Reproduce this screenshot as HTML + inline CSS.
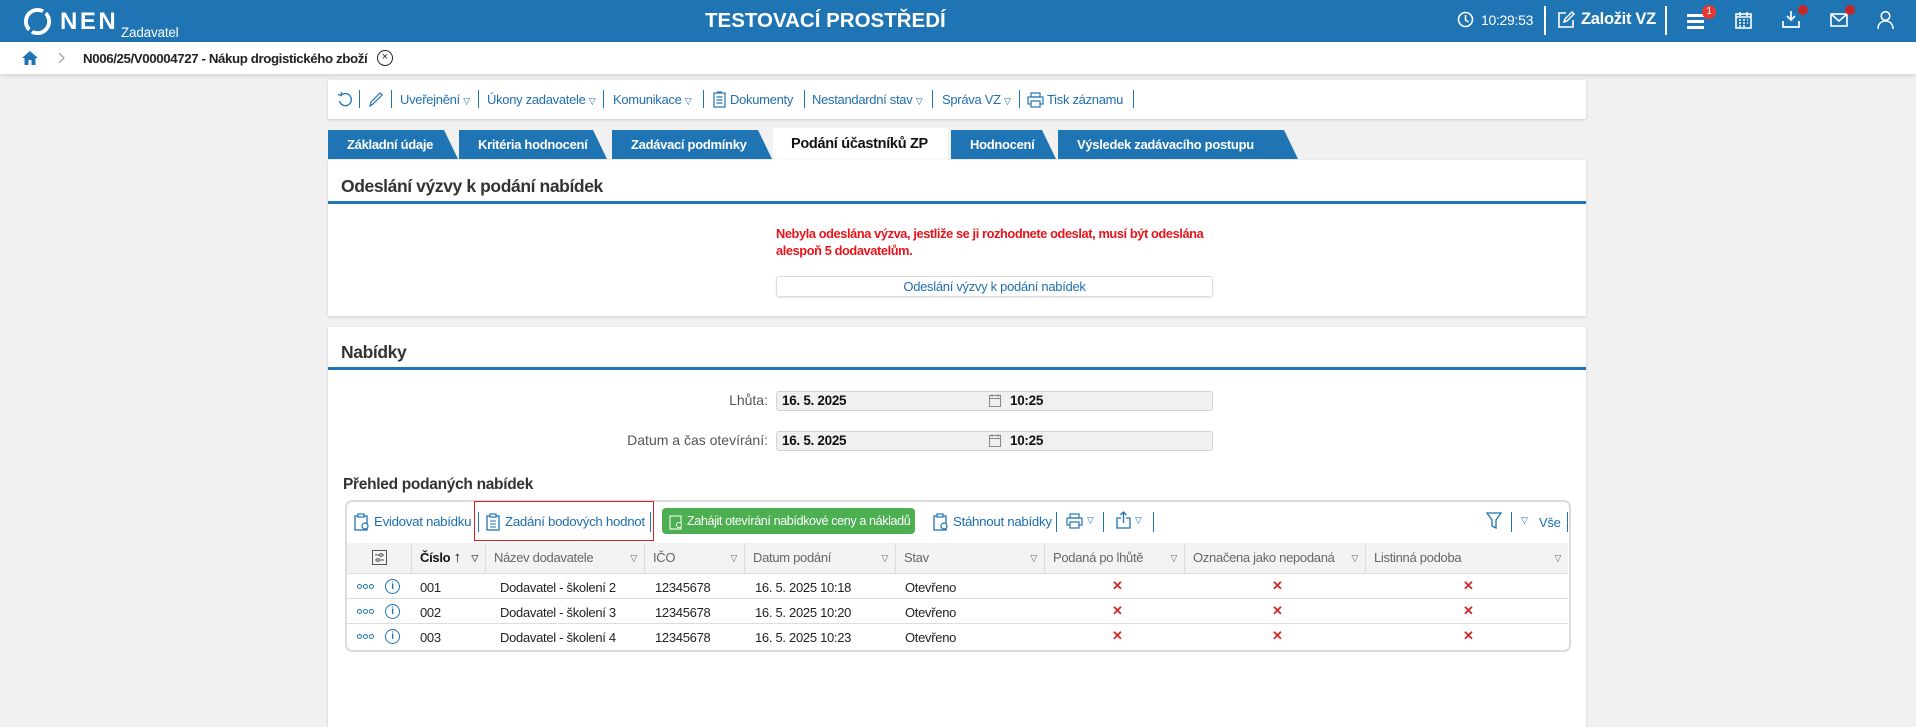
<!DOCTYPE html>
<html><head><meta charset="utf-8">
<style>
*{box-sizing:border-box;margin:0;padding:0}
body{width:1916px;height:717px;overflow:hidden;background:#f1f1f1;font-family:"Liberation Sans",Arial,sans-serif;font-size:13px;letter-spacing:-0.3px;color:#222;position:relative}
.a{position:absolute;white-space:nowrap}
.top{left:0;top:0;width:1916px;height:42px;background:#1f74b3;color:#fff}
.crumb{left:0;top:42px;width:1916px;height:32px;background:#fff;box-shadow:0 2px 4px rgba(0,0,0,.12)}
.card{background:#fff;box-shadow:0 1px 3px rgba(0,0,0,.15)}
.blue{color:#1f6fb0}
.sep{position:absolute;width:1px;background:#1f74b3}
.tab{position:absolute;top:130px;height:29px;background:#1f74b3;color:#fff;font-weight:bold;font-size:13px;line-height:29px;padding-left:19px;clip-path:polygon(0 0,calc(100% - 14px) 0,100% 100%,0 100%)}
.hdr{font-size:17.5px;font-weight:bold;color:#333;letter-spacing:-0.4px}
.line{position:absolute;height:3px;background:#1f74b3}
.inp{position:absolute;height:20px;background:#f0f0f0;border:1px solid #d3d3d3;border-radius:3px;font-weight:bold;font-size:13.5px;line-height:18px;padding-left:5px;color:#111}
.th{position:absolute;top:543px;height:30px;line-height:30px;color:#666;font-size:13px;border-right:1px solid #ddd;padding-left:8px;background:#f3f3f3}
.tri{position:absolute;right:7px;top:0;font-size:9px;color:#666}
.row{position:absolute;left:347px;width:1221px;height:25px;border-bottom:1px solid #ddd}
.x{position:absolute;color:#d42a2a;font-weight:bold;font-size:13px}
.dots{position:absolute;width:17px;height:6px}
.dots i{position:absolute;top:0;width:5px;height:5px;border:1.2px solid #1f74b3;border-radius:3px}
.info{position:absolute;width:15px;height:15px;border:1.3px solid #1f74b3;border-radius:8px;font-size:10px;text-align:center;line-height:13px;color:#1f74b3;font-weight:bold}
.lbl{position:absolute;color:#555;font-size:14px;letter-spacing:0;text-align:right;width:300px}
</style></head><body>

<div class="a top">
  <svg class="a" style="left:23px;top:7px" width="29" height="29" viewBox="0 0 30 30"><circle cx="15" cy="15" r="12" fill="none" stroke="#fff" stroke-width="4"/><path d="M6 27 L24 3" stroke="#1f74b3" stroke-width="3.5"/></svg>
  <div class="a" style="left:60px;top:8px;font-size:24px;font-weight:bold;letter-spacing:2.5px">NEN</div>
  <div class="a" style="left:121px;top:25px;font-size:13.5px;letter-spacing:-0.2px">Zadavatel</div>
  <div class="a" style="left:705px;top:9px;font-size:20.5px;font-weight:bold;letter-spacing:0">TESTOVACÍ PROSTŘEDÍ</div>
  <svg class="a" style="left:1457px;top:11px" width="17" height="17" viewBox="0 0 17 17"><circle cx="8.5" cy="8.5" r="7" fill="none" stroke="#fff" stroke-width="1.6"/><path d="M8.5 4v5l3 2" fill="none" stroke="#fff" stroke-width="1.6"/></svg>
  <div class="a" style="left:1481px;top:12px;font-size:14px">10:29:53</div>
  <div class="a" style="left:1544px;top:6px;width:2px;height:29px;background:#fff"></div>
  <svg class="a" style="left:1557px;top:10px" width="19" height="19" viewBox="0 0 19 19"><path d="M9 3H2v14h14v-7" fill="none" stroke="#fff" stroke-width="1.6"/><path d="M7 12l1-3 7-7 2 2-7 7z" fill="none" stroke="#fff" stroke-width="1.5"/></svg>
  <div class="a" style="left:1581px;top:10px;font-size:16.5px;font-weight:bold">Založit VZ</div>
  <div class="a" style="left:1665px;top:6px;width:2px;height:29px;background:#fff"></div>
  <div class="a" style="left:1687px;top:14px;width:17px;height:2.5px;background:#fff;box-shadow:0 6px 0 #fff,0 12px 0 #fff"></div>
  <div class="a" style="left:1702px;top:5px;width:14px;height:14px;border-radius:7px;background:#e53935;font-size:10px;text-align:center;line-height:14px">1</div>
  <svg class="a" style="left:1735px;top:11px" width="17" height="18" viewBox="0 0 17 18"><rect x="1" y="3" width="15" height="14" fill="none" stroke="#fff" stroke-width="1.6"/><path d="M1 6h15M5 1v4M12 1v4M4 9h2M8 9h2M12 9h1M4 12h2M8 12h2M12 12h1M4 15h2M8 15h2" stroke="#fff" stroke-width="1.6"/></svg>
  <svg class="a" style="left:1782px;top:10px" width="18" height="18" viewBox="0 0 18 18"><path d="M9 1v9M5 6l4 4 4-4M1 11v6h16v-6" fill="none" stroke="#fff" stroke-width="1.7"/></svg>
  <div class="a" style="left:1798px;top:5px;width:10px;height:10px;border-radius:5px;background:#c62828"></div>
  <svg class="a" style="left:1830px;top:13px" width="18" height="14" viewBox="0 0 18 14"><rect x="1" y="1" width="16" height="12" fill="none" stroke="#fff" stroke-width="1.6"/><path d="M1 1l8 7 8-7" fill="none" stroke="#fff" stroke-width="1.6"/></svg>
  <div class="a" style="left:1845px;top:5px;width:10px;height:10px;border-radius:5px;background:#c62828"></div>
  <svg class="a" style="left:1877px;top:10px" width="17" height="20" viewBox="0 0 17 20"><circle cx="8.5" cy="6" r="4.3" fill="none" stroke="#fff" stroke-width="1.6"/><path d="M1 19c0-5 3-8 7.5-8s7.5 3 7.5 8" fill="none" stroke="#fff" stroke-width="1.6"/></svg>
</div>

<div class="a crumb">
  <svg class="a" style="left:21px;top:8px" width="18" height="16" viewBox="0 0 18 16"><path d="M9 1L1 8h2.5v7h4v-5h3v5h4V8H17z" fill="#1f74b3"/></svg>
  <svg class="a" style="left:58px;top:10px" width="7" height="12" viewBox="0 0 7 12"><path d="M1 1l5 5-5 5" fill="none" stroke="#999" stroke-width="1.2"/></svg>
  <div class="a" style="left:83px;top:9px;font-weight:bold;font-size:13.3px;letter-spacing:-0.4px">N006/25/V00004727 - Nákup drogistického zboží</div>
  <div class="a" style="left:377px;top:8px;width:16px;height:16px;border:1.5px solid #222;border-radius:8px;font-size:11px;text-align:center;line-height:12px;letter-spacing:0">×</div>
</div>

<div class="a card" style="left:328px;top:80px;width:1258px;height:39px">
  <svg class="a" style="left:9px;top:12px" width="16" height="16" viewBox="0 0 16 16"><path d="M4 3.5A6 6 0 1 1 2.5 9" fill="none" stroke="#1f74b3" stroke-width="1.3"/><path d="M1 2.5l3.3 1 .2-3.3" fill="none" stroke="#1f74b3" stroke-width="1.3"/></svg>
  <div class="sep" style="left:31px;top:10px;height:18px"></div>
  <svg class="a" style="left:40px;top:11px" width="16" height="17" viewBox="0 0 16 17"><path d="M2 15l1-4L12 2l2 2-9 9z M2 15l3-2" fill="none" stroke="#1f74b3" stroke-width="1.2"/></svg>
  <div class="sep" style="left:63px;top:10px;height:18px"></div>
  <div class="a blue" style="left:72px;top:12px">Uveřejnění <span style="font-size:9px">▽</span></div>
  <div class="sep" style="left:150px;top:10px;height:18px"></div>
  <div class="a blue" style="left:159px;top:12px">Úkony zadavatele <span style="font-size:9px">▽</span></div>
  <div class="sep" style="left:275px;top:10px;height:18px"></div>
  <div class="a blue" style="left:285px;top:12px">Komunikace <span style="font-size:9px">▽</span></div>
  <div class="sep" style="left:375px;top:10px;height:18px"></div>
  <svg class="a" style="left:385px;top:11px" width="13" height="17" viewBox="0 0 13 17"><rect x="1" y="2" width="11" height="14" fill="none" stroke="#1f74b3" stroke-width="1.2"/><path d="M3.5 6h6M3.5 9h6M3.5 12h6M4 1h5" stroke="#1f74b3" stroke-width="1.2"/></svg>
  <div class="a blue" style="left:402px;top:12px">Dokumenty</div>
  <div class="sep" style="left:476px;top:10px;height:18px"></div>
  <div class="a blue" style="left:484px;top:12px">Nestandardní stav <span style="font-size:9px">▽</span></div>
  <div class="sep" style="left:604px;top:10px;height:18px"></div>
  <div class="a blue" style="left:614px;top:12px">Správa VZ <span style="font-size:9px">▽</span></div>
  <div class="sep" style="left:691px;top:10px;height:18px"></div>
  <svg class="a" style="left:699px;top:12px" width="17" height="16" viewBox="0 0 17 16"><rect x="4" y="1" width="9" height="4" fill="none" stroke="#1f74b3" stroke-width="1.2"/><rect x="1" y="5" width="15" height="7" fill="none" stroke="#1f74b3" stroke-width="1.2"/><rect x="4" y="9" width="9" height="6" fill="#fff" stroke="#1f74b3" stroke-width="1.2"/></svg>
  <div class="a blue" style="left:719px;top:12px">Tisk záznamu</div>
  <div class="sep" style="left:805px;top:10px;height:18px"></div>
</div>

<div class="tab" style="left:328px;width:130px">Základní údaje</div>
<div class="tab" style="left:459px;width:148px">Kritéria hodnocení</div>
<div class="tab" style="left:612px;width:160px">Zadávací podmínky</div>
<div class="a" style="left:773px;top:128px;width:175px;height:32px;background:#fff;font-weight:bold;font-size:14.5px;line-height:32px;padding-left:18px;color:#111">Podání účastníků ZP</div>
<div class="tab" style="left:951px;width:105px">Hodnocení</div>
<div class="tab" style="left:1058px;width:240px">Výsledek zadávacího postupu</div>

<div class="a card" style="left:328px;top:160px;width:1258px;height:156px">
  <div class="a hdr" style="left:13px;top:16px">Odeslání výzvy k podání nabídek</div>
  <div class="line" style="left:0;top:41px;width:1258px"></div>
  <div class="a" style="left:448px;top:65px;color:#e8141c;font-weight:bold;font-size:12.8px;line-height:17px;letter-spacing:-0.4px">Nebyla odeslána výzva, jestliže se ji rozhodnete odeslat, musí být odeslána<br>alespoň 5 dodavatelům.</div>
  <div class="a" style="left:448px;top:116px;width:437px;height:21px;border:1px solid #ddd;border-radius:3px;box-shadow:0 1px 2px rgba(0,0,0,.1);text-align:center;line-height:19px"><span class="blue">Odeslání výzvy k podání nabídek</span></div>
</div>

<div class="a card" style="left:328px;top:327px;width:1258px;height:400px">
  <div class="a hdr" style="left:13px;top:15px">Nabídky</div>
  <div class="line" style="left:0;top:40px;width:1258px"></div>
</div>
<div class="lbl" style="left:468px;top:392px">Lhůta:</div>
<div class="inp" style="left:776px;top:391px;width:437px">16. 5. 2025</div>
<div class="lbl" style="left:468px;top:432px">Datum a čas otevírání:</div>
<div class="inp" style="left:776px;top:431px;width:437px">16. 5. 2025</div>
<svg class="a" style="left:989px;top:394px" width="12" height="13" viewBox="0 0 12 13"><rect x=".5" y="1.5" width="11" height="11" fill="none" stroke="#888"/><path d="M.5 4.5h11M3 0v3M9 0v3" stroke="#888"/></svg>
<svg class="a" style="left:989px;top:434px" width="12" height="13" viewBox="0 0 12 13"><rect x=".5" y="1.5" width="11" height="11" fill="none" stroke="#888"/><path d="M.5 4.5h11M3 0v3M9 0v3" stroke="#888"/></svg>
<div class="a" style="left:1010px;top:393px;font-weight:bold;color:#111;font-size:13.5px">10:25</div>
<div class="a" style="left:1010px;top:433px;font-weight:bold;color:#111;font-size:13.5px">10:25</div>

<div class="a" style="left:343px;top:476px;font-weight:bold;font-size:15.5px;color:#333">Přehled podaných nabídek</div>

<div class="a" style="left:345px;top:500px;width:1226px;height:152px;border:2px solid #dcdcdc;border-radius:7px;background:#fff"></div>
<svg class="a" style="left:354px;top:513px" width="16" height="18" viewBox="0 0 16 18"><rect x="1" y="3" width="12" height="14" fill="none" stroke="#1f74b3" stroke-width="1.3"/><rect x="4" y="1" width="6" height="3" fill="#fff" stroke="#1f74b3" stroke-width="1.2"/><circle cx="11" cy="13" r="3" fill="#fff" stroke="#1f74b3" stroke-width="1.2"/></svg>
<div class="a blue" style="left:374px;top:514px;font-size:13.3px">Evidovat nabídku</div>
<div class="sep" style="left:478px;top:512px;height:20px"></div>
<div class="a" style="left:474px;top:501px;width:180px;height:40px;border:1.5px solid #e02020"></div>
<svg class="a" style="left:486px;top:513px" width="14" height="18" viewBox="0 0 14 18"><rect x="1" y="3" width="12" height="14" fill="none" stroke="#1f74b3" stroke-width="1.3"/><rect x="4" y="1" width="6" height="3" fill="#fff" stroke="#1f74b3" stroke-width="1.2"/><path d="M4 8h6M4 11h6M4 14h6" stroke="#1f74b3"/></svg>
<div class="a blue" style="left:505px;top:514px;font-size:13.3px">Zadání bodových hodnot</div>
<div class="sep" style="left:650px;top:512px;height:20px"></div>
<div class="a" style="left:662px;top:508px;width:253px;height:26px;background:#4caf50;border-radius:4px;color:#fff;font-size:12.6px;letter-spacing:-0.4px;line-height:26px;padding-left:25px">Zahájit otevírání nabídkové ceny a nákladů</div>
<svg class="a" style="left:669px;top:513px" width="14" height="17" viewBox="0 0 14 17"><rect x="1" y="3" width="11" height="13" fill="none" stroke="#e8f5e9" stroke-width="1.2"/><circle cx="10" cy="12" r="2.6" fill="#4caf50" stroke="#e8f5e9"/></svg>
<svg class="a" style="left:933px;top:513px" width="16" height="18" viewBox="0 0 16 18"><rect x="1" y="3" width="12" height="14" fill="none" stroke="#1f74b3" stroke-width="1.3"/><rect x="4" y="1" width="6" height="3" fill="#fff" stroke="#1f74b3" stroke-width="1.2"/><circle cx="11" cy="13" r="3" fill="#fff" stroke="#1f74b3" stroke-width="1.2"/></svg>
<div class="a blue" style="left:953px;top:514px;font-size:13.3px">Stáhnout nabídky</div>
<div class="sep" style="left:1056px;top:512px;height:20px"></div>
<svg class="a" style="left:1066px;top:513px" width="17" height="16" viewBox="0 0 17 16"><rect x="4" y="1" width="9" height="4" fill="none" stroke="#1f74b3" stroke-width="1.2"/><rect x="1" y="5" width="15" height="7" fill="none" stroke="#1f74b3" stroke-width="1.2"/><rect x="4" y="9" width="9" height="6" fill="#fff" stroke="#1f74b3" stroke-width="1.2"/></svg>
<div class="a blue" style="left:1087px;top:515px;font-size:9px">▽</div>
<div class="sep" style="left:1103px;top:512px;height:20px"></div>
<svg class="a" style="left:1116px;top:511px" width="15" height="18" viewBox="0 0 15 18"><path d="M5 7H1v10h13V7h-4M7.5 12V1M4.5 4l3-3 3 3" fill="none" stroke="#1f74b3" stroke-width="1.3"/></svg>
<div class="a blue" style="left:1135px;top:515px;font-size:9px">▽</div>
<div class="sep" style="left:1153px;top:512px;height:20px"></div>
<svg class="a" style="left:1486px;top:512px" width="16" height="17" viewBox="0 0 16 17"><path d="M1 1h14l-5 7v8l-4-2V8z" fill="none" stroke="#1f74b3" stroke-width="1.3"/></svg>
<div class="sep" style="left:1511px;top:512px;height:20px"></div>
<div class="a blue" style="left:1521px;top:515px;font-size:9px">▽</div>
<div class="a blue" style="left:1539px;top:515px">Vše</div>
<div class="sep" style="left:1567px;top:512px;height:20px"></div>

<div class="th" style="left:347px;width:65px;padding:0"></div>
<svg class="a" style="left:372px;top:550px" width="15" height="15" viewBox="0 0 15 15"><rect x=".5" y=".5" width="14" height="14" fill="none" stroke="#555"/><path d="M3 5h9M3 10h9" stroke="#555"/><circle cx="9" cy="5" r="1.4" fill="#fff" stroke="#555"/><circle cx="6" cy="10" r="1.4" fill="#fff" stroke="#555"/></svg>
<div class="th" style="left:412px;width:74px;color:#111;font-weight:bold">Číslo <span style="font-weight:normal;font-size:15px">↑</span><span class="tri">▽</span></div>
<div class="th" style="left:486px;width:159px">Název dodavatele<span class="tri">▽</span></div>
<div class="th" style="left:645px;width:100px">IČO<span class="tri">▽</span></div>
<div class="th" style="left:745px;width:151px">Datum podání<span class="tri">▽</span></div>
<div class="th" style="left:896px;width:149px">Stav<span class="tri">▽</span></div>
<div class="th" style="left:1045px;width:140px">Podaná po lhůtě<span class="tri">▽</span></div>
<div class="th" style="left:1185px;width:181px">Označena jako nepodaná<span class="tri">▽</span></div>
<div class="th" style="left:1366px;width:202px;border-right:none">Listinná podoba<span class="tri">▽</span></div>
<div class="a" style="left:347px;top:573px;width:1221px;height:1px;background:#ddd"></div>

<div class="row" style="top:574px"></div>
<div class="row" style="top:599px"></div>
<div class="row" style="top:624px;border-bottom:none"></div>

<div class="dots" style="left:357px;top:584px"><i style="left:0"></i><i style="left:6px"></i><i style="left:12px"></i></div>
<div class="info" style="left:385px;top:579px">i</div>
<div class="a" style="left:420px;top:580px">001</div>
<div class="a" style="left:500px;top:580px">Dodavatel - školení 2</div>
<div class="a" style="left:655px;top:580px">12345678</div>
<div class="a" style="left:755px;top:580px">16. 5. 2025 10:18</div>
<div class="a" style="left:905px;top:580px">Otevřeno</div>

<div class="dots" style="left:357px;top:609px"><i style="left:0"></i><i style="left:6px"></i><i style="left:12px"></i></div>
<div class="info" style="left:385px;top:604px">i</div>
<div class="a" style="left:420px;top:605px">002</div>
<div class="a" style="left:500px;top:605px">Dodavatel - školení 3</div>
<div class="a" style="left:655px;top:605px">12345678</div>
<div class="a" style="left:755px;top:605px">16. 5. 2025 10:20</div>
<div class="a" style="left:905px;top:605px">Otevřeno</div>

<div class="dots" style="left:357px;top:634px"><i style="left:0"></i><i style="left:6px"></i><i style="left:12px"></i></div>
<div class="info" style="left:385px;top:629px">i</div>
<div class="a" style="left:420px;top:630px">003</div>
<div class="a" style="left:500px;top:630px">Dodavatel - školení 4</div>
<div class="a" style="left:655px;top:630px">12345678</div>
<div class="a" style="left:755px;top:630px">16. 5. 2025 10:23</div>
<div class="a" style="left:905px;top:630px">Otevřeno</div>

<div class="x" style="left:1112px;top:578px">✕</div><div class="x" style="left:1272px;top:578px">✕</div><div class="x" style="left:1463px;top:578px">✕</div>
<div class="x" style="left:1112px;top:603px">✕</div><div class="x" style="left:1272px;top:603px">✕</div><div class="x" style="left:1463px;top:603px">✕</div>
<div class="x" style="left:1112px;top:628px">✕</div><div class="x" style="left:1272px;top:628px">✕</div><div class="x" style="left:1463px;top:628px">✕</div>

</body></html>
